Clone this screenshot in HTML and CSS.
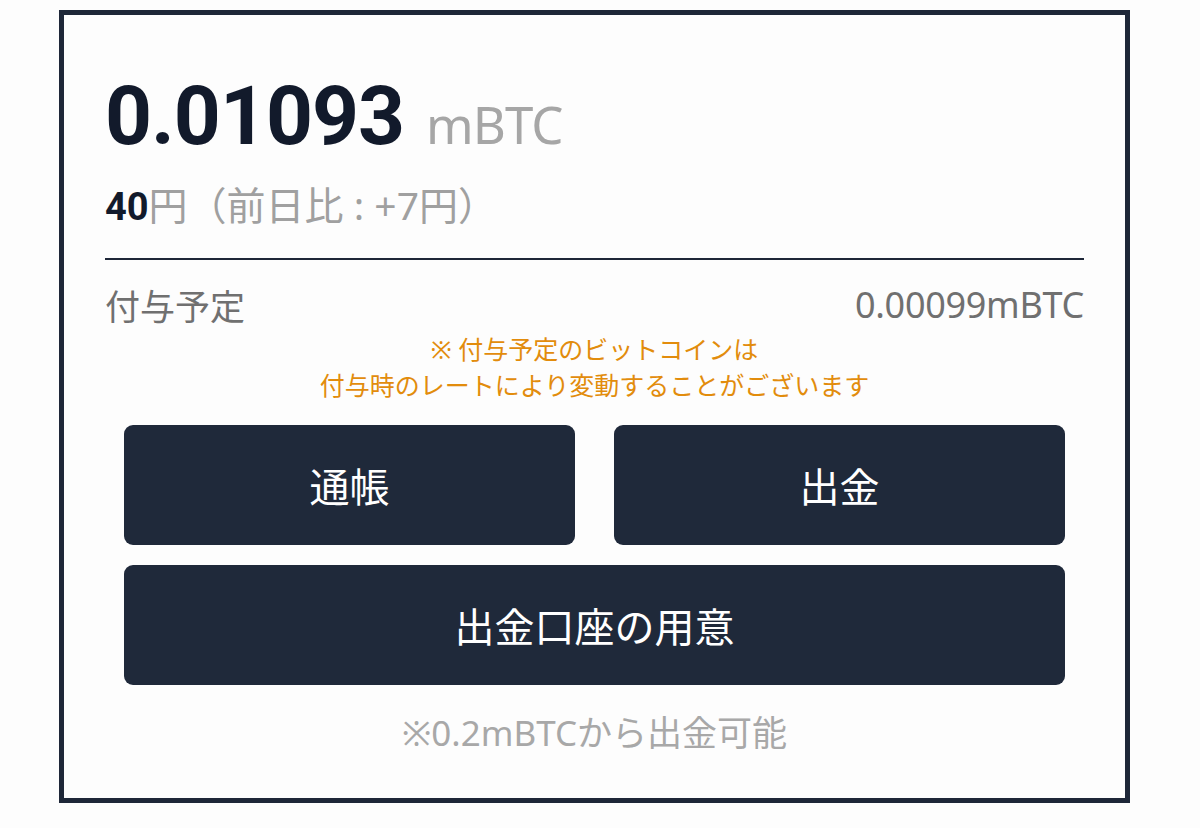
FILE: index.html
```html
<html>
<head>
  <title>ウォレット</title>
  <link rel="stylesheet" href="styles.css">
</head>
<body>
  <div class="wallet-card">
    <div class="balance">
      <span class="balance-value">0.01093</span>
      <span class="balance-unit">mBTC</span>
    </div>
    <div class="yen-line">
      <span class="yen-value">40</span>円（前日比 : +7円）
    </div>
    <div class="divider"></div>
    <div class="pending-row">
      <span class="pending-label">付与予定</span>
      <span class="pending-value">0.00099mBTC</span>
    </div>
    <div class="notice">
      ※ 付与予定のビットコインは<br>
      付与時のレートにより変動することがございます
    </div>
    <div class="button-grid">
      <button class="action-button">通帳</button>
      <button class="action-button">出金</button>
      <button class="action-button wide">出金口座の用意</button>
    </div>
    <div class="withdraw-note">※0.2mBTCから出金可能</div>
  </div>
</body>
</html>
```
FILE: styles.css
```css
body {
  margin: 0;
  background-color: #fdfdfd;
  font-family: "Noto Sans", "Noto Sans CJK JP", sans-serif;
}
.wallet-card {
  box-sizing: border-box;
  width: 1071px;
  height: 793px;
  margin: 10px 0 0 59px;
  border: 5px solid #1e2738;
  padding: 60px 41px 0 41px;
}
.balance {
  display: flex;
  align-items: baseline;
  line-height: 1;
}
.balance-value {
  font-family: Roboto, "Noto Sans", sans-serif;
  font-weight: bold;
  font-size: 82px;
  color: #121a2b;
  letter-spacing: -1px;
}
.balance-unit {
  font-family: "Noto Sans", sans-serif;
  font-size: 51px;
  color: #a6a6a6;
  margin-left: 22px;
  letter-spacing: -1px;
}
.yen-line {
  margin-top: 25px;
  font-size: 39px;
  line-height: 1.2;
  color: #a0a0a0;
}
.yen-value {
  font-family: Roboto, sans-serif;
  font-weight: bold;
  font-size: 38px;
  color: #121a2b;
}
.divider {
  margin-top: 27px;
  height: 2px;
  background-color: #1e2738;
}
.pending-row {
  display: flex;
  justify-content: space-between;
  align-items: center;
  margin-top: 24px;
  color: #707070;
  height: 42px;
}
.pending-label {
  font-size: 35px;
}
.pending-value {
  font-size: 36px;
  letter-spacing: -0.3px;
}
.notice {
  margin-top: 5px;
  text-align: center;
  color: #e28c0c;
  font-size: 25px;
  line-height: 36px;
}
.button-grid {
  display: grid;
  grid-template-columns: 1fr 1fr;
  gap: 20px 39px;
  margin: 22px 19px 0 19px;
}
.action-button {
  height: 120px;
  border: none;
  border-radius: 9px;
  background-color: #1f293a;
  color: #ffffff;
  font-family: "Noto Sans CJK JP", sans-serif;
  font-size: 40px;
}
.action-button.wide {
  grid-column: 1 / 3;
}
.withdraw-note {
  margin-top: 20px;
  text-align: center;
  color: #a8a8a8;
  font-size: 35px;
}
```
